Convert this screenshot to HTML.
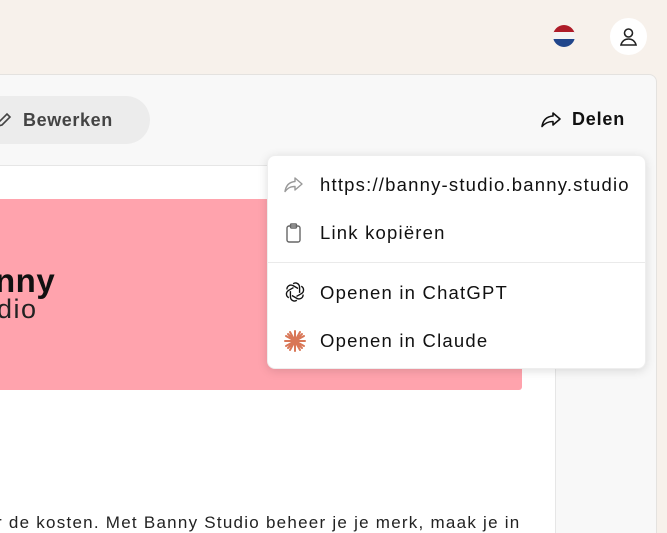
<!DOCTYPE html>
<html><head><style>
*{margin:0;padding:0;box-sizing:border-box}
html,body{width:667px;height:533px;overflow:hidden}
body{background:#f7f1eb;font-family:"Liberation Sans",sans-serif;position:relative;color:#111}
.panel{position:absolute;left:-20px;top:74px;width:677px;height:459px;background:#f8f8f8;border:1px solid #e4e2df;border-bottom:none;border-radius:8px 8px 0 0}
.content{position:absolute;left:0;top:165px;width:556px;height:368px;background:#fff;border-top:1px solid #e6e6e6;border-right:1px solid #e6e6e6}
.banner{position:absolute;left:0;top:199px;width:522px;height:191px;background:#ffa3ad;border-radius:0 0 3px 0}
.btn{position:absolute;left:-30px;top:96px;width:180px;height:48px;background:#ececec;border-radius:24px;font-weight:bold;font-size:18px;letter-spacing:0.6px;color:#444;line-height:48px;padding-left:53px}
.menu{position:absolute;left:267px;top:155px;width:379px;height:214px;background:#fff;border-radius:8px;box-shadow:0 2px 10px rgba(0,0,0,.13);border:1px solid #eee}
.it{position:absolute;left:52px;font-size:18.5px;letter-spacing:1.2px;color:#111;white-space:nowrap}
.ic{position:absolute;left:16px}
</style></head><body>
<svg style="position:absolute;left:553px;top:25px" width="22" height="22"><clipPath id="c"><circle cx="11" cy="11" r="11"/></clipPath><g clip-path="url(#c)"><rect width="22" height="8" fill="#ae1c28"/><rect y="7" width="22" height="8" fill="#f4f4f4"/><rect y="14" width="22" height="8" fill="#21468b"/></g></svg>
<div style="position:absolute;left:610px;top:18px;width:37px;height:37px;border-radius:50%;background:#fff"></div>
<svg style="position:absolute;left:618px;top:26px" width="21" height="21" fill="none" stroke="#222" stroke-width="1.6"><circle cx="10.5" cy="7" r="4"/><path d="M3 19c1-4 4-6 7.5-6s6.5 2 7.5 6z"/></svg>
<div class="panel"></div>
<div class="content"></div>
<div class="btn">Bewerken</div>
<svg style="position:absolute;left:-4px;top:111px" width="16" height="18" fill="none" stroke="#444" stroke-width="1.6"><path d="M2 15l1-4 8-8 3 3-8 8z"/></svg>
<svg style="position:absolute;left:540px;top:110px" width="22" height="20" fill="none" stroke="#111" stroke-width="1.6" stroke-linejoin="round"><path d="M13 3l7 6-7 6v-3.5c-5 0-8 1.5-11 5 1-6 4-10 11-10.5z"/></svg>
<div style="position:absolute;left:572px;top:109px;font-size:18px;font-weight:bold;letter-spacing:0.8px">Delen</div>
<div class="banner"></div>
<div style="position:absolute;left:-5px;top:262px;font-size:33px;font-weight:bold;color:#111;letter-spacing:0.5px">nny</div>
<div style="position:absolute;left:-3px;top:294px;font-size:27px;color:#222;letter-spacing:1.5px">dio</div>
<div style="position:absolute;left:-4px;top:513px;font-size:17px;line-height:20px;color:#222;white-space:nowrap;letter-spacing:1.25px">r de kosten. Met Banny Studio beheer je je merk, maak je in</div>
<div class="menu">
<svg class="ic" style="top:20px" width="20" height="18" fill="none" stroke="#999" stroke-width="1.4" stroke-linejoin="round"><path d="M11 2l7 6-7 6v-3.5c-5 0-7 1.5-10 5 1-6 4-9.5 10-10z"/></svg>
<div class="it" style="top:18px">https://banny-studio.banny.studio</div>
<svg class="ic" style="top:67px;left:18px" width="16" height="20" fill="none" stroke="#666" stroke-width="1.4"><rect x="1" y="3" width="13" height="16" rx="2"/><rect x="4.5" y="1" width="6" height="4" rx="1"/></svg>
<div class="it" style="top:66px">Link kopiëren</div>
<div style="position:absolute;left:0;right:0;top:106px;border-top:1px solid #eaeaea"></div>
<svg class="ic" style="top:125px" width="22" height="22" viewBox="0 0 24 24" fill="none" stroke="#111" stroke-width="1.5"><g transform="translate(12 12)"><path id="p" d="M-2-9c3-2 7 0 7 4v6"/><use href="#p" transform="rotate(60)"/><use href="#p" transform="rotate(120)"/><use href="#p" transform="rotate(180)"/><use href="#p" transform="rotate(240)"/><use href="#p" transform="rotate(300)"/></g></svg>
<div class="it" style="top:126px">Openen in ChatGPT</div>
<svg class="ic" style="top:174px" width="22" height="22" viewBox="0 0 22 22" stroke="#d97757" stroke-width="2" stroke-linecap="round"><path d="M11 1v20M1 11h20M4 4l14 14M18 4L4 18M6 2l10 18M16 2L6 20M2 6l18 10M2 16l18-10"/></svg>
<div class="it" style="top:174px">Openen in Claude</div>
</div>
</body></html>
